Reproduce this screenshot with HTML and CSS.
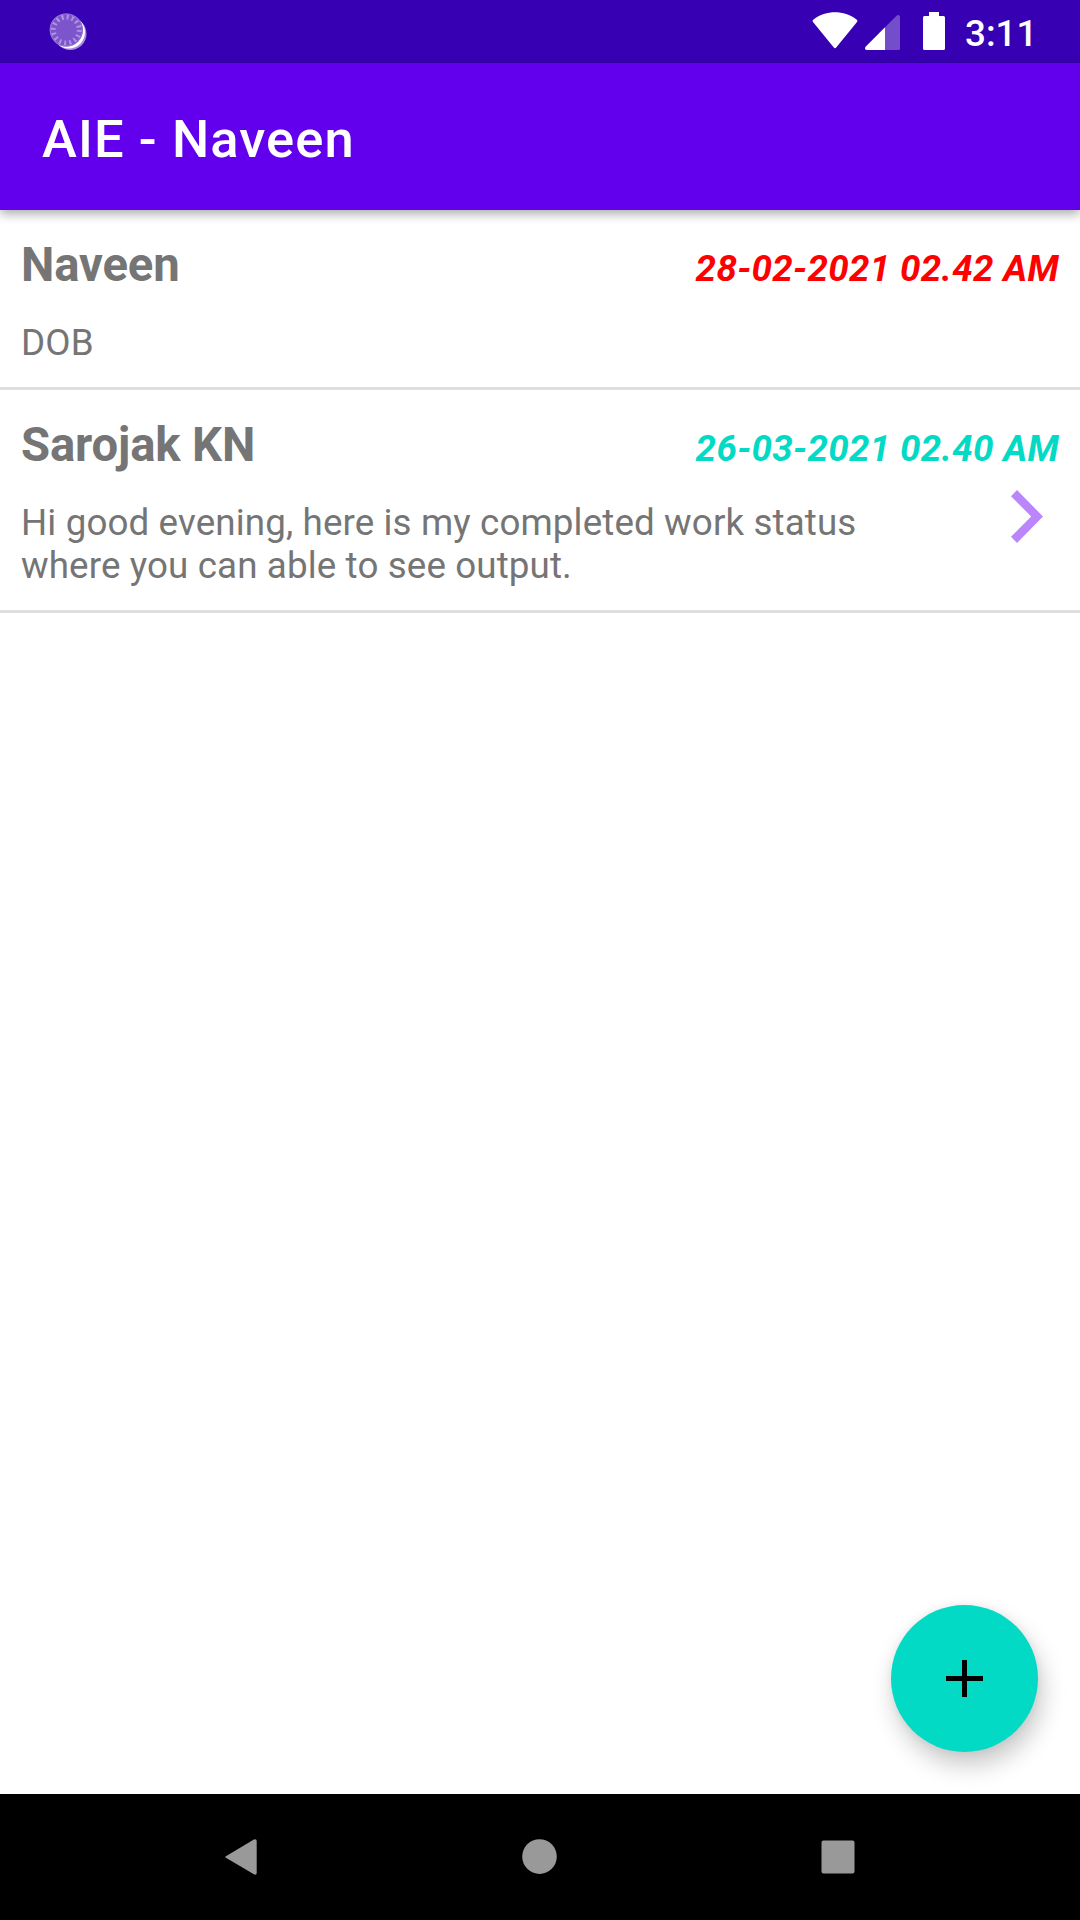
FILE: index.html
```html
<!DOCTYPE html>
<html lang="en">
<head>
<meta charset="utf-8">
<title>AIE - Naveen</title>
<link rel="stylesheet" href="styles.css">
</head>
<body>
<div class="screen">
  <header class="status-bar">
    <svg class="sync-icon" width="40" height="40" viewBox="0 0 40 40">
      <circle cx="23.3" cy="22.8" r="16.2" fill="#fff" opacity=".55"/>
      <circle cx="21.8" cy="21.3" r="16.2" fill="#fff"/>
      <circle cx="19.3" cy="19" r="16.6" fill="#7c54cb"/>
      <circle cx="19.3" cy="19" r="13" fill="none" stroke="#ad94df" stroke-width="5" stroke-dasharray="2 3.105"/>
      <circle cx="19.3" cy="19" r="16" fill="none" stroke="#9373d5" stroke-width="1.2"/>
    </svg>
    <div class="status-icons">
      <svg class="wifi" width="46" height="38" viewBox="0 0 46 38" fill="#fff">
        <path d="M1.2 10.2Q-.2 8.6 1.5 7.4C14-2.1 32-2.1 44.5 7.4Q46.2 8.6 44.8 10.2L24.4 35.3Q23 37 21.6 35.3Z"/>
      </svg>
      <svg class="signal" width="35" height="35" viewBox="0 0 35 35" fill="#fff">
        <path d="M20 12.3V35H1.6Q-1 34.5.6 31.7Z"/>
        <path d="M20 12.3L31.8.5Q34.5-.8 35 1.6V33.4Q35 35 33.4 35H20Z" opacity=".3"/>
      </svg>
      <svg class="battery" width="22" height="38" viewBox="0 0 22 38" fill="#fff">
        <path d="M6 0H16V4H20.500Q22 4 22 5.500V36.500Q22 38 20.500 38H1.500Q0 38 0 36.500V5.500Q0 4 1.500 4H6Z"/>
      </svg>
      <span class="clock">3:11</span>
    </div>
  </header>
  <div class="app-bar"><h1 class="app-title">AIE - Naveen</h1></div>
  <main class="content">
    <article class="item">
      <div class="item-head">
        <h2 class="name">Naveen</h2>
        <time class="date overdue">28-02-2021 02.42 AM</time>
      </div>
      <div class="item-body"><p class="message">DOB</p></div>
    </article>
    <article class="item">
      <div class="item-head">
        <h2 class="name">Sarojak KN</h2>
        <time class="date upcoming">26-03-2021 02.40 AM</time>
      </div>
      <div class="item-body">
        <p class="message">Hi good evening, here is my completed work status where you can able to see output.</p>
        <svg class="chevron" width="32" height="53" viewBox="0 0 32 53"><path d="M6 0L32 26.500L6 53L0 46.700L20.200 26.500L0 6.300Z" fill="#bb86fc"/></svg>
      </div>
    </article>
    <button class="fab" aria-label="Add">
      <svg width="37" height="37" viewBox="0 0 37 37"><path d="M16 0H21V16H37V21H21V37H16V21H0V16H16Z"/></svg>
    </button>
  </main>
  <nav class="nav-bar">
    <svg width="40" height="40" viewBox="0 0 40 40"><path d="M5.900 19.200L33.900 2.500Q36.600 1.600 36.700 4V36Q36.600 38.400 33.900 37.300L5.900 20.700Q4.900 19.900 5.900 19.200Z"/></svg>
    <svg width="40" height="40" viewBox="0 0 40 40"><circle cx="20.500" cy="19.600" r="17.300"/></svg>
    <svg width="40" height="40" viewBox="0 0 40 40"><rect x="3.500" y="3.500" width="33" height="33" rx="2"/></svg>
  </nav>
</div>
</body>
</html>
```
FILE: styles.css
```css
* {
  box-sizing: border-box;
  margin: 0;
}

body {
  font-family: Roboto, "Liberation Sans", sans-serif;
  background: #fff;
}

.screen {
  width: 1080px;
  height: 1920px;
  display: flex;
  flex-direction: column;
  overflow: hidden;
}

.status-bar {
  height: 63px;
  flex: none;
  display: flex;
  justify-content: space-between;
  align-items: flex-start;
  padding: 11px 44px 0 47px;
  background: #3700b3;
}

.status-icons {
  display: flex;
  align-items: flex-start;
}

.wifi {
  margin: 1px 7px 0 0;
}

.signal {
  margin: 4px 23px 0 0;
}

.battery {
  margin: 1px 20px 0 0;
}

.clock {
  width: 71px;
  margin-top: 1px;
  font-size: 36.75px;
  line-height: 43px;
  font-weight: 500;
  color: #fff;
  white-space: nowrap;
}

.app-bar {
  height: 147px;
  flex: none;
  display: flex;
  align-items: center;
  padding: 5px 42px 0;
  background: #6200ee;
  box-shadow: 0 4px 10px rgba(0, 0, 0, 0.33);
  z-index: 1;
}

.app-title {
  font-size: 52.5px;
  line-height: 62px;
  font-weight: 500;
  letter-spacing: 1.1px;
  color: #fff;
}

.content {
  flex: 1;
  position: relative;
}

.item {
  display: flex;
  flex-direction: column;
  gap: 28px;
  padding: 28px 21px 23px;
  border-bottom: 3px solid #dfdfdf;
}

.item-head {
  display: flex;
  justify-content: space-between;
  align-items: baseline;
  height: 55px;
}

.name {
  font-size: 47.25px;
  line-height: 55px;
  font-weight: 700;
  letter-spacing: -0.15px;
  color: #757575;
}

.date {
  font-size: 36.75px;
  line-height: 43px;
  font-weight: 700;
  font-style: italic;
  letter-spacing: 0.33px;
}

.overdue {
  color: #f00;
}

.upcoming {
  color: #03dac5;
}

.item-body {
  display: flex;
  justify-content: space-between;
  align-items: flex-start;
}

.message {
  width: 860px;
  font-size: 36.75px;
  line-height: 43px;
  letter-spacing: 0.12px;
  color: #757575;
}

.chevron {
  margin: -11px 16px 0 0;
}

.fab {
  position: absolute;
  right: 42px;
  bottom: 42px;
  width: 147px;
  height: 147px;
  display: grid;
  place-items: center;
  padding: 0;
  border: 0;
  border-radius: 50%;
  background: #03dac5;
  box-shadow: 4px 13px 24px rgba(0, 0, 0, 0.22), 0 0 8px rgba(0, 0, 0, 0.06);
}

.nav-bar {
  height: 126px;
  flex: none;
  display: flex;
  justify-content: space-between;
  align-items: center;
  padding: 0 222px 0 220px;
  background: #000;
  fill: #999;
}
```
